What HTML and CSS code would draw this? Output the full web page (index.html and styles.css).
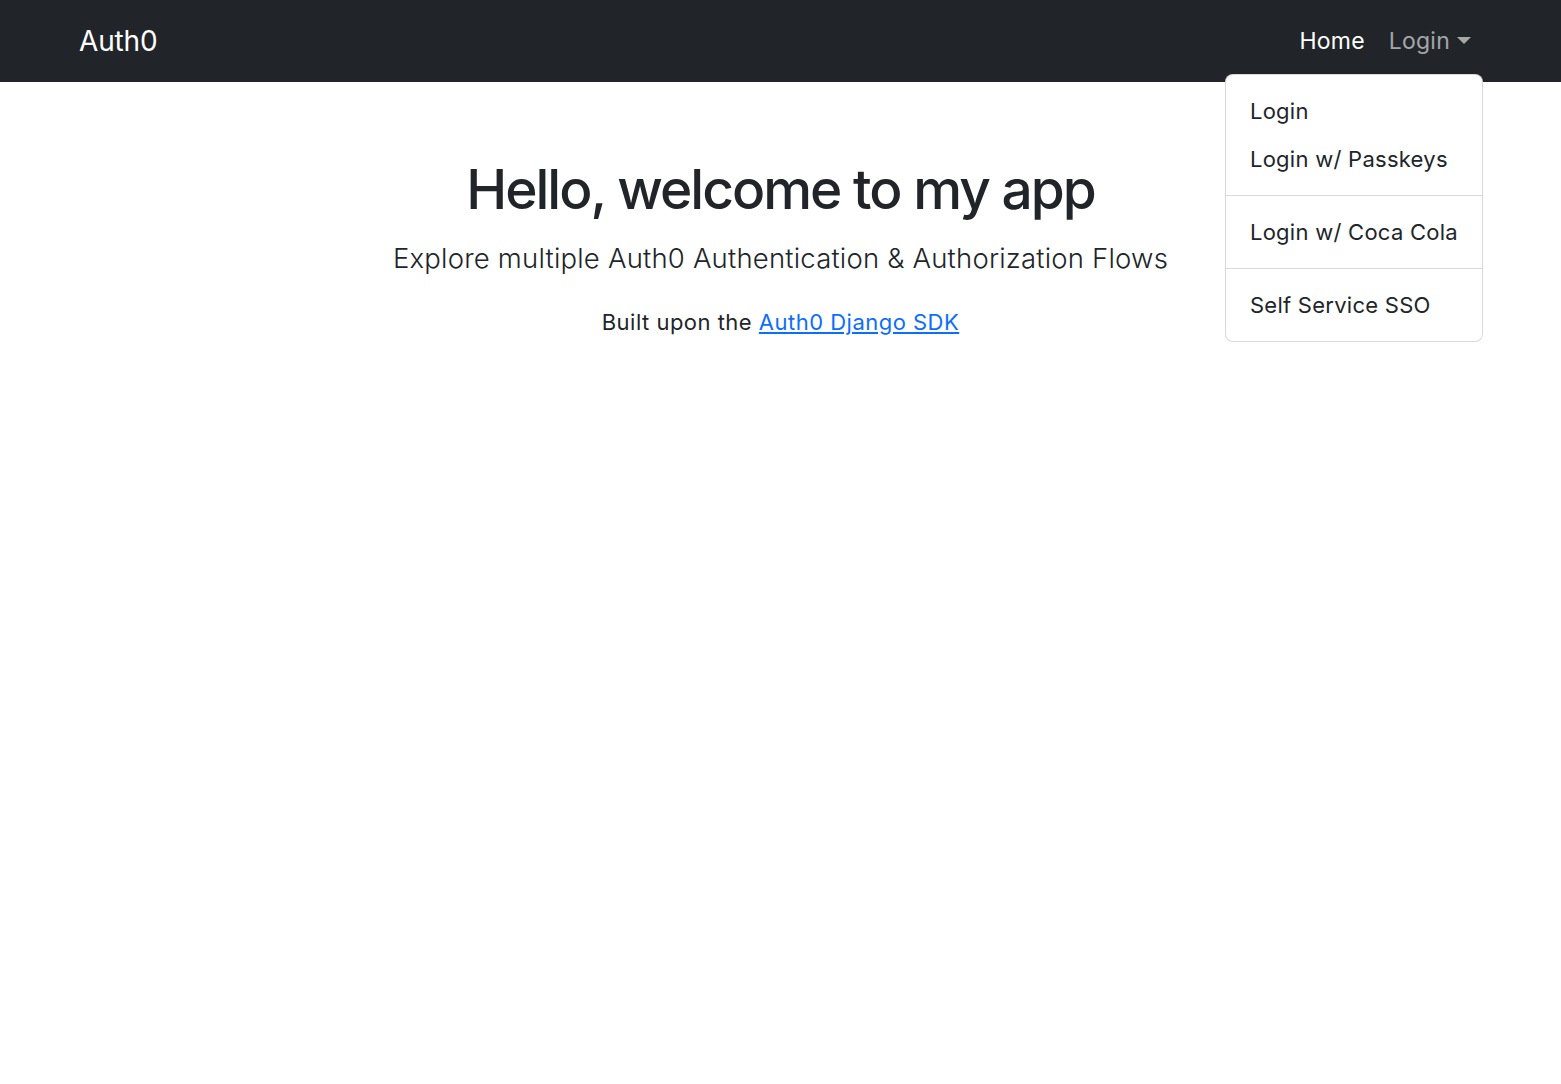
FILE: index.html
```html
<!DOCTYPE html>
<html lang="en">
<head>
<meta charset="utf-8">
<title>Auth0</title>
<link rel="stylesheet" href="styles.css">
</head>
<body>
<nav class="navbar">
  <div class="nav-inner">
    <a class="brand" href="#">Auth0</a>
    <ul class="nav">
      <li><a class="nav-link active" href="#">Home</a></li>
      <li class="dropdown">
        <a class="nav-link dropdown-toggle" href="#">Login</a>
        <ul class="dropdown-menu">
          <li><a class="dropdown-item" href="#">Login</a></li>
          <li><a class="dropdown-item" href="#">Login w/ Passkeys</a></li>
          <li><hr class="divider"></li>
          <li><a class="dropdown-item" href="#">Login w/ Coca Cola</a></li>
          <li><hr class="divider"></li>
          <li><a class="dropdown-item" href="#">Self Service SSO</a></li>
        </ul>
      </li>
    </ul>
  </div>
</nav>
<main class="hero">
  <h1 class="title">Hello, welcome to my app</h1>
  <p class="lead">Explore multiple Auth0 Authentication &amp; Authorization Flows</p>
  <p class="built">Built upon the <a class="link" href="#">Auth0 Django SDK</a></p>
</main>
</body>
</html>
```

FILE: styles.css
```css
* { box-sizing: border-box; }
html, body { margin: 0; padding: 0; }
body {
  font-family: Inter, "Noto Sans", "Liberation Sans", sans-serif;
  font-size: 22px;
  line-height: 1.5;
  color: #212529;
  background: #fff;
  min-height: 1084px;
}
a { text-decoration: none; }

.navbar {
  position: relative;
  z-index: 10;
  background: #212529;
  height: 82px;
}
.nav-inner {
  height: 100%;
  padding: 0 78px 0 79px;
  display: flex;
  align-items: center;
  justify-content: space-between;
}
.brand {
  color: #fff;
  font-size: 28px;
  line-height: 42px;
  letter-spacing: -0.005em;
}
.nav {
  list-style: none;
  margin: 0;
  padding: 0;
  display: flex;
  align-items: center;
}
.nav-link {
  display: block;
  padding: 0 12px;
  font-size: 23px;
  line-height: 34px;
  letter-spacing: 0.01em;
  color: rgba(255,255,255,0.6);
}
.nav-link.active { color: #fff; }
.dropdown { position: relative; }
.dropdown-toggle::after {
  content: "";
  display: inline-block;
  margin-left: 7px;
  vertical-align: 5px;
  border-top: 7px solid;
  border-left: 7px solid transparent;
  border-right: 7px solid transparent;
}
.dropdown-menu {
  position: absolute;
  right: 0;
  top: 50px;
  list-style: none;
  margin: 0;
  padding: 12px 0;
  background: #fff;
  border: 1px solid rgba(0,0,0,0.15);
  border-radius: 8px;
  min-width: 240px;
  white-space: nowrap;
}
.dropdown-item {
  display: block;
  padding: 6px 24px;
  font-size: 22px;
  line-height: 36px;
  letter-spacing: 0.012em;
  color: #212529;
}
.divider {
  margin: 12px 0;
  border: 0;
  border-top: 1px solid rgba(0,0,0,0.15);
  height: 0;
}

.hero {
  text-align: center;
  padding-top: 74px;
}
.title {
  margin: 0 0 15px;
  font-size: 55px;
  font-weight: 500;
  line-height: 66px;
  letter-spacing: -0.036em;
}
.lead {
  margin: 0 0 26px;
  font-size: 27.5px;
  font-weight: 300;
  line-height: 42px;
  letter-spacing: 0.007em;
}
.built {
  margin: 0;
  font-size: 22px;
  line-height: 34px;
  letter-spacing: 0.022em;
}
.link {
  color: #0d6efd;
  text-decoration: underline;
}
```
